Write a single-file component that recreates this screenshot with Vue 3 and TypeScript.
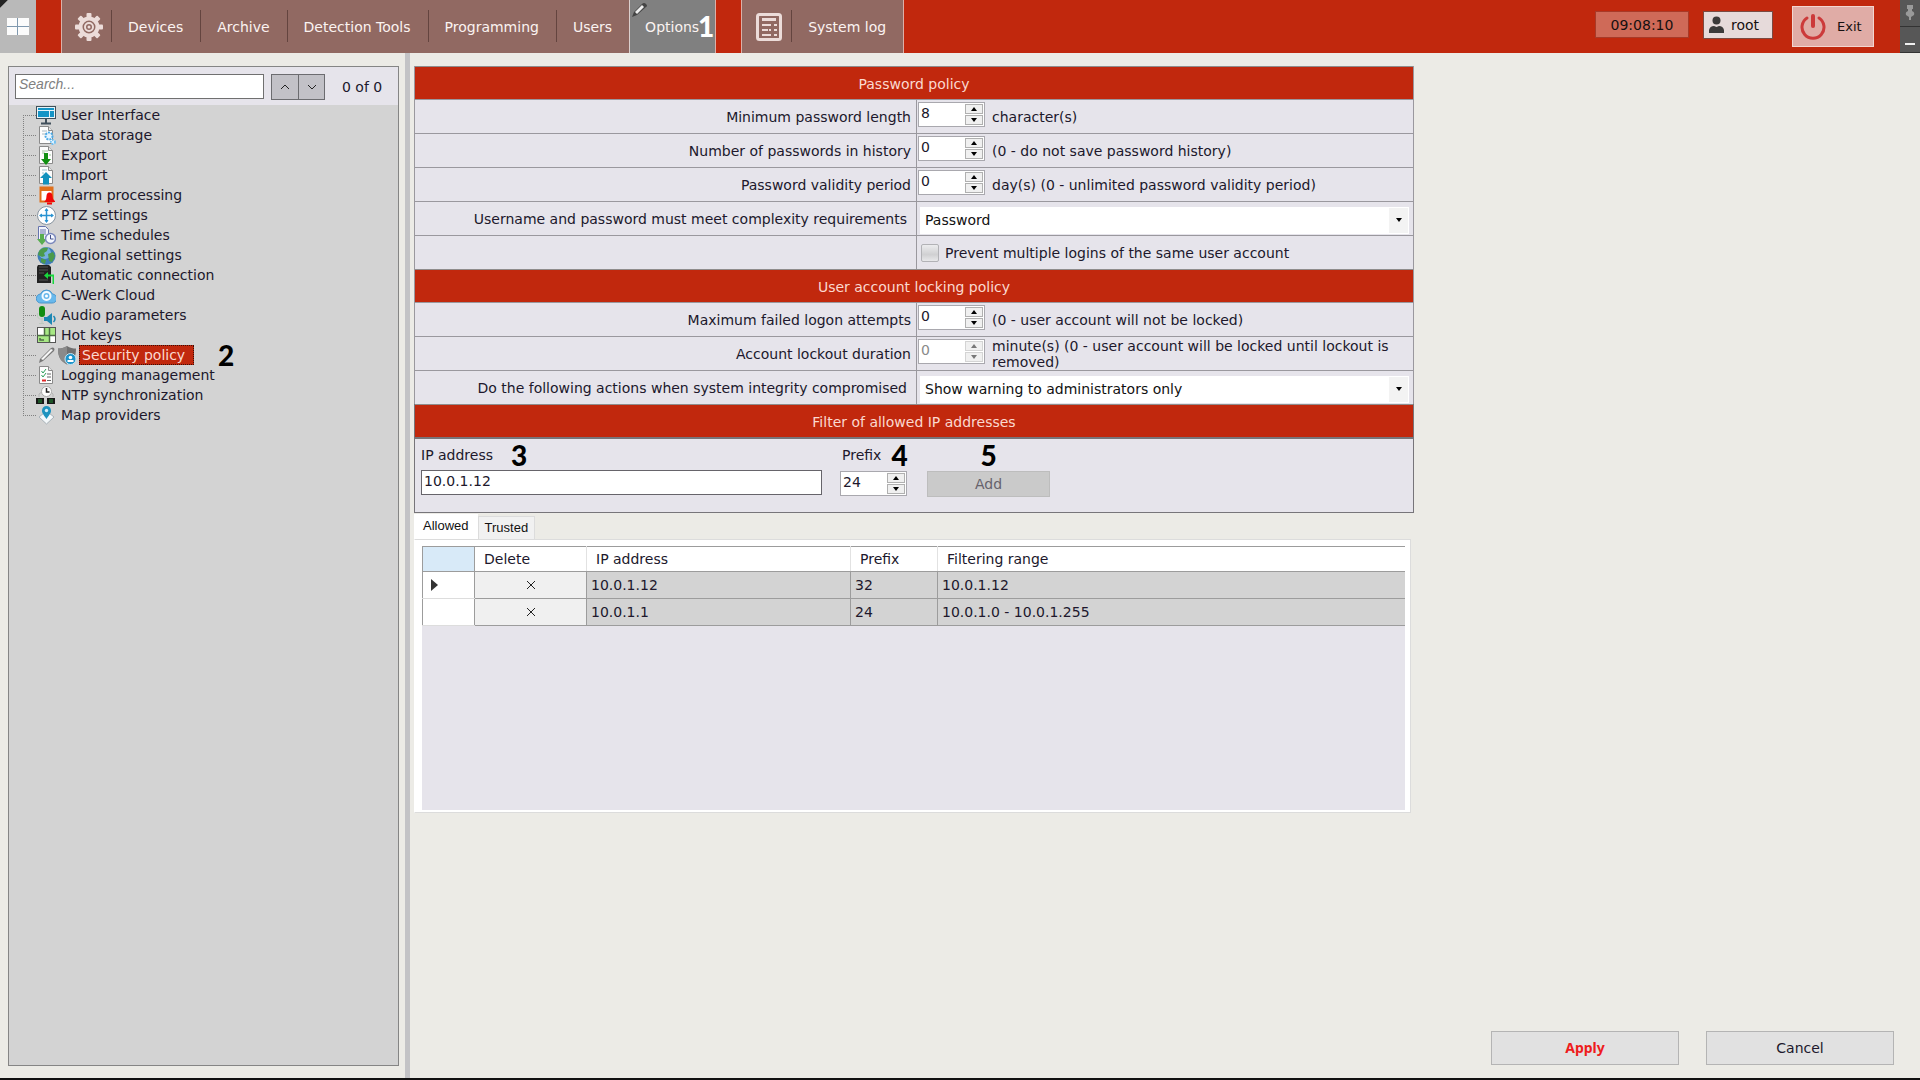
<script setup lang="ts">
import { ref } from 'vue'

interface TreeItem {
  label: string
  icon: string
  selected?: boolean
}

interface PolicyRow {
  id: string
  label: string
  kind: 'number' | 'select' | 'check'
  value?: number
  hint?: string
  options?: string[]
  disabled?: boolean
}

interface PolicySection {
  title: string
  rows: PolicyRow[]
}

const page = '<path d="M3.500 1.500h9l4 4v13h-13z" fill="#fdfdfd" stroke="#8a8a8a"/><path d="M12.500 1.500v4h4" fill="#e4e4e4" stroke="#8a8a8a"/>'

const tree: TreeItem[] = [
  {
    label: 'User Interface',
    icon: '<rect x="0.500" y="1.500" width="19" height="12" fill="#e8f4fa" stroke="#41505c"/><rect x="2" y="3" width="16" height="2" fill="#1594c6"/><rect x="2" y="6" width="11" height="6" fill="#1594c6"/><rect x="14" y="6" width="4" height="6" fill="#1594c6"/><path d="M10 14v4M5 18.500h10" stroke="#41505c" stroke-width="2"/>',
  },
  {
    label: 'Data storage',
    icon: page + '<path d="M6 6h5M6 9h4" stroke="#a8b8c0"/><circle cx="13" cy="11" r="3.500" fill="#e6f5ff" stroke="#4ba9e6" stroke-width="2" stroke-dasharray="2 1"/><circle cx="17" cy="17" r="2" fill="#e6f5ff" stroke="#6fc0f2" stroke-width="2" stroke-dasharray="1.500 1"/>',
  },
  {
    label: 'Export',
    icon: page + '<path d="M6 6h6M6 8h3M13 10h2" stroke="#9cc49c"/><path d="M8 8h4v6h3l-5 6-5-6h3z" fill="#109010"/>',
  },
  {
    label: 'Import',
    icon: page + '<path d="M6 5h5M6 8h2" stroke="#9cc4d0"/><path d="M10 7l6 6h-3v6.500H7V13H4z" fill="#1192be"/>',
  },
  {
    label: 'Alarm processing',
    icon: '<rect x="4.500" y="2.500" width="12" height="14" fill="#fff" stroke="#e0701c" stroke-width="2"/><rect x="4" y="2" width="13" height="4" fill="#e0701c"/><path d="M9 16c2-2 1-5 2-7 1-2 4-2 5 0 1 2 0 5 3 7v1H8z" fill="#f00808"/><rect x="11" y="17.500" width="5" height="2" fill="#f00808"/>',
  },
  {
    label: 'PTZ settings',
    icon: '<circle cx="10.500" cy="10.500" r="9" fill="#fff" stroke="#8794a0"/><path d="M10.500 4v13M4 10.500h13" stroke="#2a93d2" stroke-width="1.500"/><path d="M8.500 6l2-3 2 3zM8.500 15l2 3 2-3zM6 8.500l-3 2 3 2zM15 8.500l3 2-3 2z" fill="#2a93d2"/>',
  },
  {
    label: 'Time schedules',
    icon: '<path d="M2.500 1.500h7l3 3v10h-10z" fill="#f2f4fb" stroke="#6674ad"/><path d="M4 5h6M4 7h6M4 9h6" stroke="#6674ad"/><path d="M4 9h4v5h3l-5 6-5-6h3z" fill="#58ad50"/><circle cx="14.500" cy="13.500" r="5" fill="#f4f7ff" stroke="#7a88bc" stroke-width="1.500"/><path d="M14.500 10v4h3" fill="none" stroke="#43518a"/>',
  },
  {
    label: 'Regional settings',
    icon: '<circle cx="10.500" cy="11" r="9" fill="#3e7db8"/><circle cx="9" cy="8" r="6" fill="#75b0dd"/><path d="M3 6c3-4 7-4 9-3l-1 3-3 2 1 3-3 1-4-2zM12 9l5-2 2 4-3 6-3-1zM5 13l5 2-1 4-4-2z" fill="#4b9a4b"/>',
  },
  {
    label: 'Automatic connection',
    icon: '<path d="M2 0h11l2 2v16H1V2z" fill="#222"/><path d="M3 2h9M3 5h9M3 8h5M3 15h9" stroke="#555"/><path d="M8 10.500l4-3.500v2.500h6v9.500h-1.500v-7.500H12V14z" fill="#18d83c"/>',
  },
  {
    label: 'C-Werk Cloud',
    icon: '<path d="M5 18a4.500 4.500 0 0 1-.500-9A6.500 6.500 0 0 1 16.500 9 4.500 4.500 0 0 1 16 18z" fill="#68b8ec" stroke="#4a96cc"/><circle cx="10.500" cy="11" r="4" fill="none" stroke="#f4fbff" stroke-width="2"/><circle cx="10.500" cy="11" r="1.500" fill="#fff"/>',
  },
  {
    label: 'Audio parameters',
    icon: '<rect x="3" y="1" width="6" height="11" rx="3" fill="#118c11"/><path d="M1.500 8v3c0 3 4 4 6 2M6 13v5M3 18.500h5" stroke="#bfc9bf" fill="none"/><path d="M8 12h3l5-4v12l-5-4H8z" fill="#1c87b4"/><path d="M17.500 11c2 2 2 4 0 6" stroke="#1c87b4" fill="none" stroke-width="1.500"/>',
  },
  {
    label: 'Hot keys',
    icon: '<rect x="1.500" y="2.500" width="18" height="15" fill="#fff" stroke="#555"/><path d="M9 3h10v7H9zM2 11h11v6H2z" fill="#a7e884"/><path d="M1 10.500h18M8.500 3v7M13.500 3v7M13.500 11v7M4 13v2h4" stroke="#4d6b45" stroke-width="1.500" fill="none"/>',
  },
  {
    label: 'Security policy',
    selected: true,
    icon: '<path d="M10 1c3 2 6 2.500 9 2.500 0 8-2 13-9 16C3 16 1 11 1 3.500 4 3.500 7 3 10 1z" fill="#707070"/><path d="M10 1v18.500C3 16 1 11 1 3.500 4 3.500 7 3 10 1z" fill="#8a8a8a"/><circle cx="13.500" cy="14" r="5.500" fill="#1e94ca" stroke="#c6e6f4"/><circle cx="13.500" cy="12.500" r="1.800" fill="#fff"/><path d="M10.500 17v-2h6v2z" fill="#fff"/>',
  },
  {
    label: 'Logging management',
    icon: page + '<path d="M5.500 6l1.500 2 3-4M5.500 10l1.500 2 3-4" stroke="#2ca05a" fill="none"/><path d="M11 9h4M11 12h4" stroke="#666"/><path d="M6 15.500h4" stroke="#e02828" stroke-width="2"/><path d="M11 15.500h4" stroke="#666"/>',
  },
  {
    label: 'NTP synchronization',
    icon: '<path d="M3 12V9l4-3h7l3 3v3" fill="none" stroke="#b4b4b4"/><circle cx="10.500" cy="6.500" r="5" fill="#fff" stroke="#aaa"/><path d="M10.500 3v4h3" stroke="#222" stroke-width="1.500" fill="none"/><rect x="0" y="13" width="8" height="6" fill="#181818"/><rect x="11" y="13" width="8" height="6" fill="#181818"/><path d="M2 15h4M13 15h4M2 17h4M13 17h4" stroke="#238f37"/>',
  },
  {
    label: 'Map providers',
    icon: '<path d="M3 12l7.500-6 7.500 6-7.500 7z" fill="#f4f8fa" stroke="#a8b2b8"/><path d="M10.500 14C7 9 6 8 6 5.500a4.500 4.500 0 0 1 9 0C15 8 14 9 10.500 14z" fill="#1e93bf"/><circle cx="10.500" cy="5.500" r="1.700" fill="#d5eef8"/>',
  },
]

const navItems = ['Devices', 'Archive', 'Detection Tools', 'Programming', 'Users']

const sections: PolicySection[] = [
  {
    title: 'Password policy',
    rows: [
      { id: 'min-length', label: 'Minimum password length', kind: 'number', value: 8, hint: 'character(s)' },
      { id: 'history', label: 'Number of passwords in history', kind: 'number', value: 0, hint: '(0 - do not save password history)' },
      { id: 'validity', label: 'Password validity period', kind: 'number', value: 0, hint: 'day(s) (0 - unlimited password validity period)' },
      { id: 'complexity', label: 'Username and password must meet complexity requirements', kind: 'select', options: ['Password'] },
      { id: 'multi-login', label: '', kind: 'check', hint: 'Prevent multiple logins of the same user account' },
    ],
  },
  {
    title: 'User account locking policy',
    rows: [
      { id: 'attempts', label: 'Maximum failed logon attempts', kind: 'number', value: 0, hint: '(0 - user account will not be locked)' },
      { id: 'lockout', label: 'Account lockout duration', kind: 'number', value: 0, hint: 'minute(s) (0 - user account will be locked until lockout is removed)', disabled: true },
      { id: 'integrity', label: 'Do the following actions when system integrity compromised', kind: 'select', options: ['Show warning to administrators only'] },
    ],
  },
]

const addresses = [
  { ip: '10.0.1.12', prefix: 32, range: '10.0.1.12' },
  { ip: '10.0.1.1', prefix: 24, range: '10.0.1.0 - 10.0.1.255' },
]

const search = ref('')
const ipAddress = ref('10.0.1.12')
const prefix = ref(24)

function step(row: PolicyRow, delta: number) {
  row.value = Math.max(0, (row.value ?? 0) + delta)
}
</script>

<template>
  <div class="app">
    <header class="topbar">
      <button class="layouts" aria-label="Layouts">
        <svg width="22" height="17" viewBox="0 0 22 17"><rect width="22" height="17" fill="#7f98ae" /><path d="M0 0h10v8H0zM11 0h11v8H11zM0 9h10v8H0zM11 9h11v8H11z" fill="#fbfbfb" /></svg>
      </button>
      <nav class="group settings">
        <span class="gear">
          <svg width="28" height="28" viewBox="-14 -14 28 28">
            <g fill="#ecdcd9">
              <rect v-for="n in 8" :key="n" x="-2.500" y="-14" width="5" height="7" rx="1" :transform="`rotate(${n * 45})`" />
            </g>
            <circle r="8.500" fill="none" stroke="#ecdcd9" stroke-width="4" />
            <circle r="4" fill="none" stroke="#ecdcd9" stroke-width="2" />
            <circle r="1.500" fill="#ecdcd9" />
          </svg>
        </span>
        <a v-for="item in navItems" :key="item" href="#" class="nav-link">{{ item }}</a>
        <a href="#" class="nav-link active">
          Options
          <svg class="nav-pencil" width="16" height="16" viewBox="0 0 16 16"><path d="M1 15l2-5 8-8q2-2 4 0t0 3l-9 8z" fill="#444" /><path d="M4 10l7-7 2 2-7 7z" fill="#eee" /></svg>
          <b class="callout nav-callout">1</b>
        </a>
      </nav>
      <nav class="group log">
        <span class="log-icon">
          <svg width="26" height="28" viewBox="0 0 26 28"><rect x="1.500" y="1.500" width="23" height="25" rx="2" fill="none" stroke="#ecdcd9" stroke-width="3" /><path d="M6 6.500h14" stroke="#ecdcd9" stroke-width="3" /><path d="M6 12h9M18 12h3M6 17h6M18 17h3M13 17h2M6 22h9M18 22h3" stroke="#ecdcd9" stroke-width="2" /></svg>
        </span>
        <a href="#" class="nav-link">System log</a>
      </nav>
      <div class="session">
        <time class="clock">09:08:10</time>
        <button class="user">
          <svg width="15" height="17" viewBox="0 0 15 17"><circle cx="7.500" cy="4.500" r="4" fill="#3c3a3a" /><path d="M0 17v-3q1-4 5-4l2.500 1L10 10q4 0 5 4v3z" fill="#3c3a3a" /></svg>
          root
        </button>
        <button class="exit">
          <svg width="26" height="26" viewBox="0 0 26 26"><path d="M7 4a11 11 0 1 0 12 0" fill="none" stroke="#cc3a3a" stroke-width="3" stroke-linecap="round" /><path d="M13 2v10" stroke="#cc3a3a" stroke-width="4" stroke-linecap="round" /></svg>
          Exit
        </button>
        <div class="window-buttons">
          <button aria-label="Pin"><svg width="10" height="16" viewBox="0 0 10 16"><path d="M2 0h6v4H7v2q3 1 2 4L6 12v3H4v-3L1 10q-1-3 2-4V4H2z" fill="#9a9a9a" /></svg></button>
          <button aria-label="Minimize"><svg width="10" height="16" viewBox="0 0 10 16"><path d="M0 12h10v2H0z" fill="#f0f0f0" /></svg></button>
        </div>
      </div>
    </header>

    <div class="body">
      <aside class="sidebar">
        <div class="search">
          <input v-model="search" type="text" placeholder="Search..." aria-label="Search" />
          <div class="steppers">
            <button aria-label="Previous match"><svg width="10" height="6" viewBox="0 0 10 6"><path d="M1 5l4-4 4 4" fill="none" stroke="#222" /></svg></button>
            <button aria-label="Next match"><svg width="10" height="6" viewBox="0 0 10 6"><path d="M1 1l4 4 4-4" fill="none" stroke="#222" /></svg></button>
          </div>
          <span>0 of 0</span>
        </div>
        <ul class="tree">
          <li v-for="item in tree" :key="item.label">
            <span class="branch"></span>
            <svg v-if="item.selected" class="edit-mark" width="20" height="20" viewBox="0 0 20 20"><path d="M3 18l1-4L15 3q2-1 3 0t0 3L7 16z" fill="#777" /><path d="M5 14L15 4l2 1L7 15z" fill="#f6f6f6" /></svg>
            <svg width="20" height="20" viewBox="0 0 20 20" v-html="item.icon"></svg>
            <a href="#" :class="{ selected: item.selected }">{{ item.label }}</a>
            <b v-if="item.selected" class="callout">2</b>
          </li>
        </ul>
      </aside>

      <main class="main">
        <div class="content">
          <section v-for="section in sections" :key="section.title" class="policy">
            <h2>{{ section.title }}</h2>
            <div v-for="row in section.rows" :key="row.id" class="policy-row">
              <label class="name" :class="{ inset: row.kind === 'select' }" :for="row.id">{{ row.label }}</label>
              <div class="value">
                <template v-if="row.kind === 'number'">
                  <div class="spin" :class="{ disabled: row.disabled }">
                    <input :id="row.id" v-model="row.value" type="number" :disabled="row.disabled" />
                    <div class="arrows">
                      <button aria-label="Increase" :disabled="row.disabled" @click="step(row, 1)"><svg width="8" height="4" viewBox="0 0 8 4"><path d="M1 4l3-4 3 4z" /></svg></button>
                      <button aria-label="Decrease" :disabled="row.disabled" @click="step(row, -1)"><svg width="8" height="4" viewBox="0 0 8 4"><path d="M1 0l3 4 3-4z" /></svg></button>
                    </div>
                  </div>
                  <span class="hint">{{ row.hint }}</span>
                </template>
                <div v-else-if="row.kind === 'select'" class="drop">
                  <select :id="row.id">
                    <option v-for="option in row.options" :key="option">{{ option }}</option>
                  </select>
                  <span class="drop-arrow"><svg width="6" height="4" viewBox="0 0 6 4"><path d="M0 0l3 4 3-4z" /></svg></span>
                </div>
                <label v-else class="check"><input :id="row.id" type="checkbox" />{{ row.hint }}</label>
              </div>
            </div>
          </section>

          <section class="filter">
            <h2>Filter of allowed IP addresses</h2>
            <form class="filter-form" @submit.prevent>
              <div class="field ip">
                <div class="caption"><label for="ip">IP address</label><b class="callout">3</b></div>
                <input id="ip" v-model="ipAddress" type="text" />
              </div>
              <div class="field prefix">
                <div class="caption"><label for="prefix">Prefix</label><b class="callout">4</b></div>
                <div class="spin">
                  <input id="prefix" v-model="prefix" type="number" />
                  <div class="arrows">
                    <button type="button" aria-label="Increase" @click="prefix++"><svg width="8" height="4" viewBox="0 0 8 4"><path d="M1 4l3-4 3 4z" /></svg></button>
                    <button type="button" aria-label="Decrease" @click="prefix--"><svg width="8" height="4" viewBox="0 0 8 4"><path d="M1 0l3 4 3-4z" /></svg></button>
                  </div>
                </div>
              </div>
              <div class="field add">
                <div class="caption"><b class="callout">5</b></div>
                <button type="submit" disabled>Add</button>
              </div>
            </form>
          </section>

          <section class="lists">
            <div class="tabs" role="tablist">
              <button role="tab" aria-selected="true" class="current">Allowed</button>
              <button role="tab" aria-selected="false">Trusted</button>
            </div>
            <div class="tab-panel">
              <div class="grid">
                <table>
                  <colgroup><col class="c-mark" /><col class="c-delete" /><col class="c-ip" /><col class="c-prefix" /><col /></colgroup>
                  <thead>
                    <tr><th></th><th>Delete</th><th>IP address</th><th>Prefix</th><th>Filtering range</th></tr>
                  </thead>
                  <tbody>
                    <tr v-for="(row, i) in addresses" :key="row.ip">
                      <td class="marker"><svg v-if="i === 0" width="7" height="12" viewBox="0 0 7 12"><path d="M0 0l7 6-7 6z" fill="#333" /></svg></td>
                      <td class="remove"><button :aria-label="`Delete ${row.ip}`"><svg width="10" height="10" viewBox="0 0 10 10"><path d="M1 1l8 8M9 1L1 9" stroke="#222" /></svg></button></td>
                      <td>{{ row.ip }}</td>
                      <td>{{ row.prefix }}</td>
                      <td>{{ row.range }}</td>
                    </tr>
                  </tbody>
                </table>
              </div>
            </div>
          </section>
        </div>

        <footer class="actions">
          <button class="apply">Apply</button>
          <button>Cancel</button>
        </footer>
      </main>
    </div>
  </div>
</template>

<style>
body {
  margin: 0;
  background: #ecebe6;
}
</style>

<style scoped>
.app,
.app *,
.app *::before {
  box-sizing: border-box;
}

.app {
  display: flex;
  flex-direction: column;
  min-height: 100vh;
  background: #ecebe6;
  border-bottom: 2px solid #111;
  color: #20182c;
  font: 14px/16px 'DejaVu Sans', Verdana, sans-serif;
}

button,
input,
select {
  margin: 0;
  padding: 0;
  border: 0;
  border-radius: 0;
  background: none;
  color: inherit;
  font: inherit;
}

a {
  color: inherit;
  text-decoration: none;
}

svg {
  display: block;
  flex: none;
}

h2 {
  margin: 0;
  height: 33px;
  border-top: 1px solid #8f8c8c;
  background: #c1280d;
  color: #fbd9d0;
  font-size: 14px;
  font-weight: 400;
  line-height: 34px;
  text-align: center;
}

.callout {
  color: #000;
  font: 900 28px/20px Lato, Carlito, sans-serif;
}

/* Top bar */
.topbar {
  display: flex;
  height: 53px;
  background: #c1280d;
  color: #fbf3f1;
}

.layouts {
  display: flex;
  align-items: center;
  justify-content: center;
  width: 36px;
  background: linear-gradient(135deg, #222 5px, #b9b9b9 6px);
}

.group {
  display: flex;
  margin-left: 25px;
  border: solid #dcb0a8;
  border-width: 0 1px;
  background: #916962;
}

.gear {
  display: flex;
  align-items: center;
  padding: 0 8px 0 13px;
}

.log-icon {
  display: flex;
  align-items: center;
  padding: 0 9px 0 14px;
}

.nav-link {
  position: relative;
  display: flex;
  align-items: center;
  padding: 0 17px;
}

.nav-link::before {
  content: '';
  position: absolute;
  top: 10px;
  left: 0;
  width: 1px;
  height: 32px;
  background: #64443f;
}

.nav-link.active {
  padding: 0 16px 0 15px;
  border-left: 1px solid #dcd0ce;
  background: #808080;
}

.nav-link.active::before {
  display: none;
}

.nav-pencil {
  position: absolute;
  top: 2px;
  left: 1px;
}

.nav-callout {
  position: absolute;
  top: 16px;
  right: 1px;
  color: #fff;
}

.session {
  display: flex;
  align-items: center;
  margin-left: auto;
}

.clock,
.user,
.exit {
  display: flex;
  align-items: center;
  color: #151010;
}

.clock {
  justify-content: center;
  width: 94px;
  height: 27px;
  margin-bottom: 4px;
  border: 1px solid #a83a28;
  background: #cf6a58;
}

.user {
  gap: 7px;
  width: 70px;
  height: 28px;
  margin: 0 19px 4px 14px;
  padding-left: 5px;
  border: 1px solid #7a4a42;
  background: #e6dada;
}

.exit {
  gap: 11px;
  width: 82px;
  height: 41px;
  margin-right: 26px;
  padding-left: 7px;
  border: 1px solid #f3d6d0;
  background: #e0aca6;
  font-size: 13px;
}

.window-buttons {
  display: flex;
  flex-direction: column;
  width: 20px;
  height: 53px;
}

.window-buttons button {
  display: flex;
  flex: 1;
  align-items: center;
  justify-content: center;
  border-bottom: 1px solid #333;
  background: #575757;
}

/* Sidebar */
.body {
  display: flex;
  flex: 1;
}

.sidebar {
  flex: 0 0 391px;
  margin: 13px 6px 12px 8px;
  border: 1px solid #858585;
  background: #d3d3d3;
}

.search {
  display: flex;
  align-items: center;
  height: 38px;
  padding: 0 6px;
  background: #e6e4eb;
}

.search input {
  width: 249px;
  height: 25px;
  padding: 0 3px 4px;
  border: 1px solid #707070;
  background: #fff;
  font: italic 14px/16px 'Liberation Sans', Arial, sans-serif;
}

.search input::placeholder {
  color: #808080;
  opacity: 1;
}

.steppers {
  display: flex;
  margin: 2px 17px 0 7px;
  border: 1px solid #6c6c70;
}

.steppers button {
  display: flex;
  align-items: center;
  justify-content: center;
  width: 26px;
  height: 24px;
  background: #c2c1c7;
}

.steppers button + button {
  border-left: 1px solid #6c6c70;
}

.search span {
  padding-top: 2px;
}

.tree {
  margin: 0;
  padding: 0 0 0 14px;
  list-style: none;
}

.tree li {
  display: flex;
  align-items: center;
  height: 20px;
}

.branch {
  width: 13px;
  height: 20px;
  background:
    repeating-linear-gradient(90deg, #808080 0 1px, transparent 1px 2px) 0 10px / 13px 1px no-repeat,
    repeating-linear-gradient(180deg, #808080 0 1px, transparent 1px 2px) 0 0 / 1px 20px no-repeat;
}

.tree li:first-child .branch {
  background-position: 0 10px, 0 10px;
}

.tree li:last-child .branch {
  background-size: 13px 1px, 1px 10px;
}

.tree a {
  margin-left: 5px;
  line-height: 18px;
}

.tree a.selected {
  width: 115px;
  margin-left: 2px;
  padding: 0 2px;
  border: 1px dotted #3a0f08;
  background: #c1280d;
  color: #fbd9d0;
}

.edit-mark {
  margin-right: 1px;
}

.tree .callout {
  margin-left: 24px;
}

/* Main area */
.main {
  display: flex;
  flex: 1;
  flex-direction: column;
  min-width: 0;
  padding: 13px 26px 13px 4px;
  border-left: 5px solid #c3c3c6;
}

.content {
  width: 100%;
  max-width: 1000px;
}

.policy,
.filter {
  border: solid #9a989e;
  border-width: 0 1px;
  background: #e6e4eb;
}

.policy-row {
  display: grid;
  grid-template-columns: 501px minmax(0, 1fr);
  height: 34px;
  border-top: 1px solid #9a989e;
}

.name {
  padding: 9px 5px 0 0;
  text-align: right;
}

.name.inset {
  padding-right: 9px;
}

.value {
  display: flex;
  align-items: center;
  border-left: 1px solid #9a989e;
}

.spin {
  display: flex;
  flex: none;
  width: 67px;
  height: 25px;
  padding: 1px;
  border: 1px solid #a9a8ae;
  background: #fff;
}

.value .spin {
  margin: 0 7px 4px 1px;
}

.spin input {
  width: 45px;
  padding: 0 1px 3px;
  appearance: textfield;
}

.spin input::-webkit-inner-spin-button {
  display: none;
}

.spin.disabled {
  color: #8a8a8a;
}

.spin.disabled svg {
  fill: #777;
}

.arrows {
  display: flex;
  flex: 1;
  flex-direction: column;
  gap: 1px;
}

.arrows button {
  display: flex;
  flex: 1;
  align-items: center;
  justify-content: center;
  border: 1px solid #b0b0b0;
  background: #f0f0f0;
}

.spin.disabled .arrows button {
  border-color: #d4d4d4;
}

.hint {
  padding-top: 1px;
}

.drop {
  display: flex;
  flex: 1;
  height: 27px;
  margin: 3px 4px 0 3px;
  background: #fff;
  color: #111;
}

.drop select {
  flex: 1;
  padding: 0 0 0 5px;
  appearance: none;
}

.drop-arrow {
  display: flex;
  align-items: center;
  justify-content: center;
  width: 19px;
  margin: 1px;
  background: #f3f3f3;
}

.check {
  display: flex;
  align-items: center;
  gap: 6px;
}

.check input {
  width: 18px;
  height: 18px;
  margin-left: 4px;
  border: 1px solid #b2b2b6;
  border-radius: 2px;
  background: linear-gradient(#ececee, #d0d0d2 60%, #e8e8ea);
  appearance: none;
}

/* IP filter */
.filter-form {
  display: flex;
  height: 76px;
  padding: 6px 6px 0;
  border: solid #77757a;
  border-width: 2px 0 1px;
}

.filter {
  border-color: #77757a;
}

.caption {
  display: flex;
  align-items: center;
  height: 20px;
  margin-bottom: 5px;
}

.ip {
  width: 401px;
  margin-right: 18px;
}

.ip .callout {
  margin-left: 18px;
}

.ip input {
  width: 100%;
  height: 25px;
  padding: 0 2px 3px;
  border: 1px solid #66646a;
  background: #fff;
}

.prefix {
  width: 68px;
  margin-right: 19px;
}

.prefix .caption {
  padding-left: 2px;
}

.prefix .callout {
  margin-left: 10px;
}

.prefix .caption,
.add .caption {
  margin-bottom: 6px;
}

.add {
  width: 123px;
}

.add .caption {
  justify-content: center;
}

.add button {
  width: 100%;
  height: 26px;
  border: 1px solid #bdbdbd;
  background: #cacaca;
  color: #66626c;
}

/* Address lists */
.lists {
  margin-right: 3px;
}

.tabs {
  display: flex;
  align-items: flex-end;
  margin-top: 1px;
}

.tabs button {
  height: 23px;
  padding: 0 6px;
  border: 1px solid #dcdcdc;
  border-bottom: 0;
  background: #f1f1f1;
  color: #111;
  font: 13px/16px 'Liberation Sans', Arial, sans-serif;
}

.tabs .current {
  height: 25px;
  padding: 0 8px 3px;
  border-color: #fff;
  background: #fff;
}

.tab-panel {
  padding: 6px 5px 2px 7px;
  border: 1px solid #dcdcdc;
  border-left-color: #fff;
  background: #fff;
}

.grid {
  min-height: 264px;
  background: #e6e4eb;
}

table {
  width: 100%;
  border-collapse: collapse;
  table-layout: fixed;
}

.c-mark {
  width: 52px;
}

.c-delete {
  width: 112px;
}

.c-ip {
  width: 264px;
}

.c-prefix {
  width: 87px;
}

th {
  height: 25px;
  padding: 0 9px;
  border: solid #9c9c9c;
  border-width: 1px 0;
  border-right: 1px solid #e2e2e2;
  background: #fff;
  color: #20182c;
  font-weight: 400;
  text-align: left;
}

th:first-child {
  border-left: 1px solid #9c9c9c;
  border-right-color: #9c9c9c;
  background: #d8eaf8;
}

th:last-child {
  border-right: 0;
}

td {
  height: 27px;
  padding: 0 4px;
  border: 1px solid #9c9c9c;
  background: #d3d3d3;
}

td:last-child {
  border-right: 0;
}

.marker {
  padding-left: 8px;
  border-top-color: #ddd;
  border-bottom-color: #ddd;
  background: #fff;
}

.remove {
  padding: 0;
  background: #f0f0f0;
}

.remove button {
  display: flex;
  align-items: center;
  justify-content: center;
  width: 100%;
  height: 26px;
}

/* Footer */
.actions {
  display: flex;
  gap: 27px;
  justify-content: flex-end;
  margin-top: auto;
}

.actions button {
  width: 188px;
  height: 34px;
  border: 1px solid #b4b4b4;
  background: #e1e1e1;
}

.actions .apply {
  color: #ee1c1c;
  font: 700 14px/16px 'Noto Sans', 'Open Sans', sans-serif;
}
</style>
